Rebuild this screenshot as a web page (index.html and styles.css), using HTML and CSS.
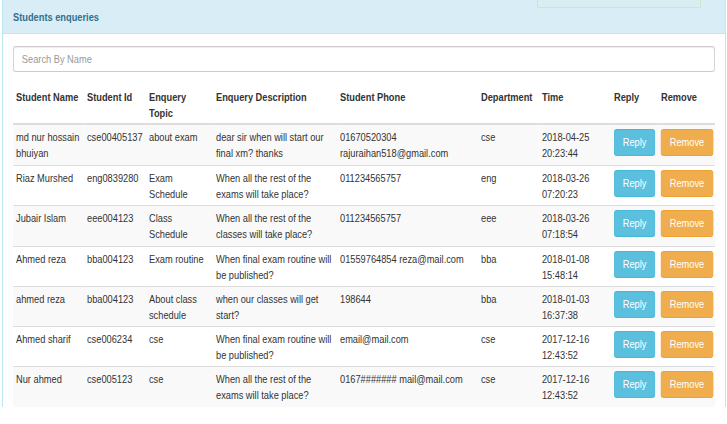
FILE: index.html
```html
<!DOCTYPE html>
<html lang="en">
<head>
<meta charset="utf-8">
<title>Students enqueries</title>
<link rel="stylesheet" href="styles.css">
</head>
<body>
<div class="panel">
  <div class="ghost-alert"></div>
  <div class="panel-heading"><span class="narrow">Students enqueries</span></div>
  <div class="panel-body">
    <div class="sheet">
      <input class="search" type="text" placeholder="Search By Name">
      <table class="table">
        <colgroup>
          <col class="c-name"><col class="c-id"><col class="c-topic"><col class="c-desc"><col class="c-phone"><col class="c-dept"><col class="c-time"><col class="c-reply"><col class="c-remove">
        </colgroup>
        <thead>
          <tr><th>Student Name</th><th>Student Id</th><th>Enquery Topic</th><th>Enquery Description</th><th>Student Phone</th><th>Department</th><th>Time</th><th>Reply</th><th>Remove</th></tr>
        </thead>
        <tbody>
          <tr><td>md nur hossain bhuiyan</td><td>cse00405137</td><td>about exam</td><td>dear sir when will start our final xm? thanks</td><td>01670520304 rajuraihan518@gmail.com</td><td>cse</td><td>2018-04-25 20:23:44</td><td><button class="btn btn-info">Reply</button></td><td><button class="btn btn-warning">Remove</button></td></tr>
          <tr><td>Riaz Murshed</td><td>eng0839280</td><td>Exam Schedule</td><td>When all the rest of the exams will take place?</td><td>011234565757</td><td>eng</td><td>2018-03-26 07:20:23</td><td><button class="btn btn-info">Reply</button></td><td><button class="btn btn-warning">Remove</button></td></tr>
          <tr><td>Jubair Islam</td><td>eee004123</td><td>Class Schedule</td><td>When all the rest of the classes will take place?</td><td>011234565757</td><td>eee</td><td>2018-03-26 07:18:54</td><td><button class="btn btn-info">Reply</button></td><td><button class="btn btn-warning">Remove</button></td></tr>
          <tr><td>Ahmed reza</td><td>bba004123</td><td>Exam routine</td><td>When final exam routine will be published?</td><td>01559764854 reza@mail.com</td><td>bba</td><td>2018-01-08 15:48:14</td><td><button class="btn btn-info">Reply</button></td><td><button class="btn btn-warning">Remove</button></td></tr>
          <tr><td>ahmed reza</td><td>bba004123</td><td>About class schedule</td><td>when our classes will get start?</td><td>198644</td><td>bba</td><td>2018-01-03 16:37:38</td><td><button class="btn btn-info">Reply</button></td><td><button class="btn btn-warning">Remove</button></td></tr>
          <tr><td>Ahmed sharif</td><td>cse006234</td><td>cse</td><td>When final exam routine will be published?</td><td>email@mail.com</td><td>cse</td><td>2017-12-16 12:43:52</td><td><button class="btn btn-info">Reply</button></td><td><button class="btn btn-warning">Remove</button></td></tr>
          <tr><td>Nur ahmed</td><td>cse005123</td><td>cse</td><td>When all the rest of the exams will take place?</td><td>0167####### mail@mail.com</td><td>cse</td><td>2017-12-16 12:43:52</td><td><button class="btn btn-info">Reply</button></td><td><button class="btn btn-warning">Remove</button></td></tr>
        </tbody>
      </table>
    </div>
  </div>
</div>
</body>
</html>
```
FILE: styles.css
```css
html, body {
  margin: 0;
  padding: 0;
  background: #fff;
}
body {
  font-family: "Liberation Sans", Arial, sans-serif;
  font-size: 11.3px;
  line-height: 16px;
  color: #333;
  overflow: hidden;
}
/* the reference is a horizontally squeezed capture: text is drawn at 82% width */
.narrow {
  display: inline-block;
  transform: scaleX(0.82);
  transform-origin: 0 0;
}
.panel {
  position: relative;
  margin-left: 2px;
  width: 722px;
  border: 1px solid #bce8f1;
  border-top: 0;
  border-bottom: 0;
  background: #fff;
  overflow: hidden;
}
.ghost-alert {
  position: absolute;
  left: 534px;
  top: -20px;
  width: 162px;
  height: 26px;
  border: 1px solid rgba(190, 220, 170, 0.5);
  background: rgba(223, 240, 216, 0.2);
  border-radius: 2px;
}
.panel-heading {
  box-sizing: border-box;
  height: 34px;
  padding: 9px 10px 0;
  background: #d9edf7;
  border-bottom: 1px solid #bce8f1;
  color: #31708f;
  font-weight: bold;
}
.panel-body {
  padding: 12px 10px 0 10px;
}
.sheet {
  width: 856.1px;
  transform: scaleX(0.82);
  transform-origin: 0 0;
}
.search {
  display: block;
  box-sizing: border-box;
  width: 100%;
  height: 26px;
  margin: 0;
  padding: 0 9.76px;
  font: inherit;
  color: #555;
  border: 1px solid #ccc;
  border-radius: 3.66px / 3px;
  box-shadow: inset 0 1px 1px rgba(0,0,0,.075);
  outline: none;
}
.search::placeholder {
  color: #999;
}
.table {
  margin-top: 13px;
  width: 100%;
  table-layout: fixed;
  border-collapse: collapse;
  border-spacing: 0;
}
.c-name { width: 86.59px; }
.c-id { width: 75.61px; }
.c-topic { width: 81.71px; }
.c-desc { width: 151.22px; }
.c-phone { width: 171.95px; }
.c-dept { width: 74.39px; }
.c-time { width: 87.8px; }
.c-reply { width: 57.32px; }
.c-remove { width: 69.51px; }
.table th {
  text-align: left;
  font-weight: bold;
  vertical-align: top;
  padding: 4px 3.66px 2px;
  border-bottom: 2px solid #ddd;
}
.table td {
  vertical-align: top;
  padding: 4px 3.66px 3.3px;
  border-top: 1px solid #ddd;
}
.table tbody tr:first-child td {
  border-top: 0;
  padding-bottom: 4px;
}
.table tbody tr:nth-child(odd) {
  background: #f9f9f9;
}
.btn {
  display: inline-block;
  box-sizing: border-box;
  height: 27px;
  margin: 0;
  padding: 0 9.76px;
  font: inherit;
  line-height: 25px;
  color: #fff;
  border: 1px solid transparent;
  border-width: 1px 1.22px;
  border-radius: 3.66px / 3px;
  white-space: nowrap;
  cursor: pointer;
}
.btn-info {
  background: #5bc0de;
  border-color: #46b8da;
}
.btn-warning {
  background: #f0ad4e;
  border-color: #eea236;
}
```
